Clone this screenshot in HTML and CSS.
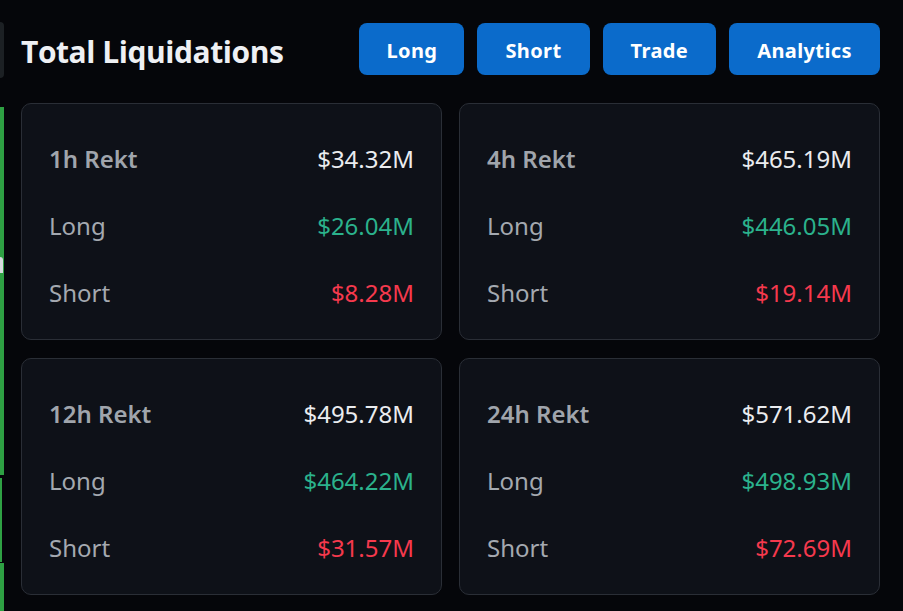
FILE: index.html
```html
<!DOCTYPE html>
<html>
<head>
<meta charset="utf-8">
<link rel="stylesheet" href="styles.css">
</head>
<body>
<div class="page">
  <div class="sliver">
    <div class="sliver-box"></div>
    <div class="sliver-green"><div class="sliver-glyph"></div></div>
    <div class="sliver-outline"></div>
    <div class="sliver-green sliver-last"></div>
  </div>
  <main class="panel">
    <header class="header">
      <h1 class="title">Total Liquidations</h1>
      <nav class="actions">
        <button class="btn">Long</button>
        <button class="btn">Short</button>
        <button class="btn">Trade</button>
        <button class="btn">Analytics</button>
      </nav>
    </header>
    <section class="grid">
      <div class="card">
        <div class="row"><span class="label head">1h Rekt</span><span class="val">$34.32M</span></div>
        <div class="row"><span class="label">Long</span><span class="val up">$26.04M</span></div>
        <div class="row"><span class="label">Short</span><span class="val down">$8.28M</span></div>
      </div>
      <div class="card">
        <div class="row"><span class="label head">4h Rekt</span><span class="val">$465.19M</span></div>
        <div class="row"><span class="label">Long</span><span class="val up">$446.05M</span></div>
        <div class="row"><span class="label">Short</span><span class="val down">$19.14M</span></div>
      </div>
      <div class="card">
        <div class="row"><span class="label head">12h Rekt</span><span class="val">$495.78M</span></div>
        <div class="row"><span class="label">Long</span><span class="val up">$464.22M</span></div>
        <div class="row"><span class="label">Short</span><span class="val down">$31.57M</span></div>
      </div>
      <div class="card">
        <div class="row"><span class="label head">24h Rekt</span><span class="val">$571.62M</span></div>
        <div class="row"><span class="label">Long</span><span class="val up">$498.93M</span></div>
        <div class="row"><span class="label">Short</span><span class="val down">$72.69M</span></div>
      </div>
    </section>
  </main>
</div>
</body>
</html>
```
FILE: styles.css
```css
* { box-sizing: border-box; }
html, body {
  margin: 0;
  padding: 0;
  background: #05060a;
  width: 903px;
  height: 611px;
  overflow: hidden;
}
body {
  font-family: "Noto Sans", "Open Sans", sans-serif;
  color: #eaecef;
}
.page {
  display: flex;
  height: 611px;
}
.sliver {
  width: 4px;
  display: flex;
  flex-direction: column;
  overflow: hidden;
}
.sliver > div { flex-shrink: 0; }
.sliver-box {
  margin-top: 22px;
  height: 56px;
  width: 4px;
  background: #1c2024;
  border-radius: 0 6px 6px 0;
}
.sliver-green {
  margin-top: 29px;
  height: 368px;
  width: 4px;
  background: #2ea043;
  position: relative;
  overflow: hidden;
}
.sliver-glyph {
  position: absolute;
  left: 0;
  top: 150px;
  width: 3px;
  height: 16px;
  background: #d6d9dd;
  border-radius: 0 3px 0 0;
}
.sliver-outline {
  margin-top: 3px;
  height: 84px;
  width: 4px;
  border-left: 2px solid #2ea043;
}
.sliver-last {
  margin-top: 1px;
  height: 60px;
}
.panel {
  flex: 1;
  padding: 23px 23px 0 17px;
}
.header {
  display: flex;
  align-items: center;
  justify-content: space-between;
  height: 52px;
}
.title {
  margin: 0;
  padding-top: 4px;
  font-family: "Open Sans", "Noto Sans", sans-serif;
  font-weight: 700;
  font-size: 30px;
  letter-spacing: -0.45px;
  color: #eef0f4;
}
.actions {
  display: flex;
  gap: 13px;
}
.btn {
  height: 52px;
  border: 0;
  border-radius: 8px;
  background: #0b6bcb;
  color: #ffffff;
  font-family: "Noto Sans", sans-serif;
  font-weight: 700;
  font-size: 20px;
  letter-spacing: 0.4px;
  padding: 2px 28px 0;
}
.btn:first-child { padding: 2px 27px 0; }
.grid {
  margin-top: 28px;
  display: grid;
  grid-template-columns: 1fr 1fr;
  column-gap: 17px;
  row-gap: 18px;
}
.card {
  height: 237px;
  background: #0e1118;
  border: 1px solid #2a2e36;
  border-radius: 10px;
  padding: 21px 27px 0 27px;
}
.row {
  height: 67px;
  display: flex;
  align-items: center;
  justify-content: space-between;
  font-size: 24px;
}
.label {
  color: #a4a9b0;
}
.label.head {
  font-weight: 600;
  color: #a0a5ac;
}
.val { color: #eaecef; }
.val.up { color: #2bb28c; }
.val.down { color: #f5394d; }
```
